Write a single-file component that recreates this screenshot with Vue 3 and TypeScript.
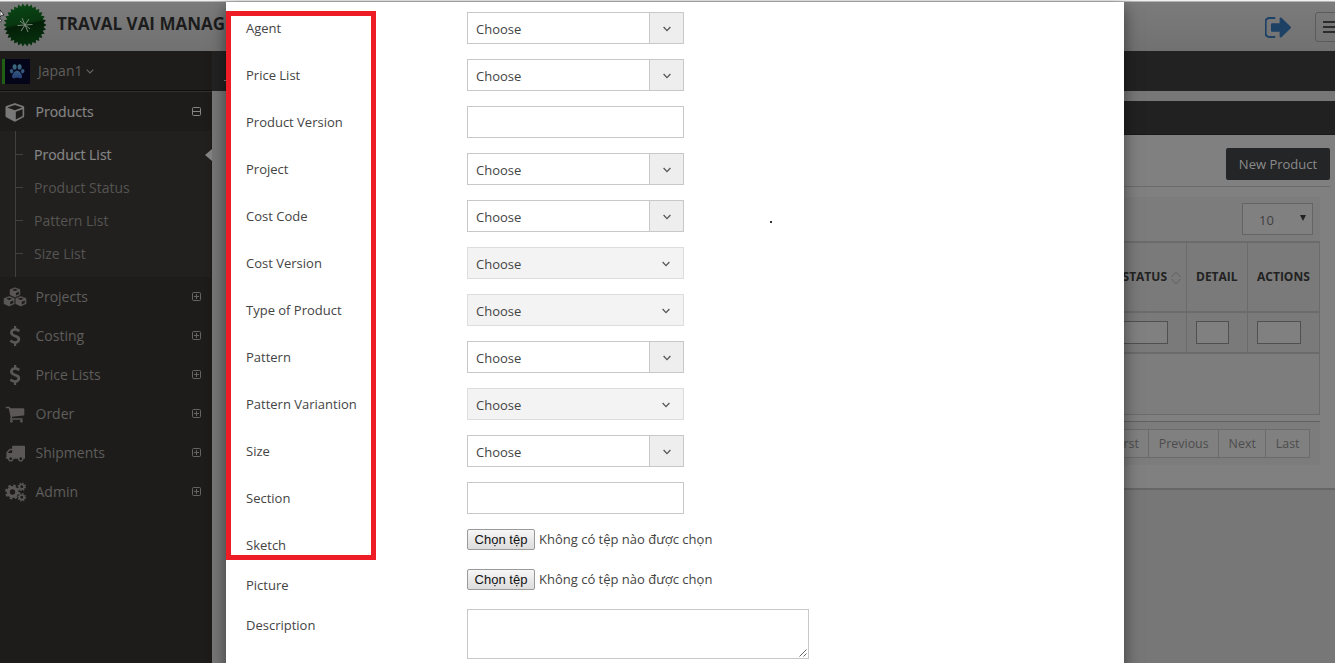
<script setup lang="ts">
interface NavItem { label: string; icon: string }
interface Field { label: string; kind: 'select' | 'disabled' | 'text' | 'file' | 'area' }

const subItems: string[] = ['Product List', 'Product Status', 'Pattern List', 'Size List']

const navItems: NavItem[] = [
  { label: 'Projects', icon: 'cubes' },
  { label: 'Costing', icon: 'usd' },
  { label: 'Price Lists', icon: 'usd' },
  { label: 'Order', icon: 'cart' },
  { label: 'Shipments', icon: 'truck' },
  { label: 'Admin', icon: 'cogs' },
]

const fields: Field[] = [
  { label: 'Agent', kind: 'select' },
  { label: 'Price List', kind: 'select' },
  { label: 'Product Version', kind: 'text' },
  { label: 'Project', kind: 'select' },
  { label: 'Cost Code', kind: 'select' },
  { label: 'Cost Version', kind: 'disabled' },
  { label: 'Type of Product', kind: 'disabled' },
  { label: 'Pattern', kind: 'select' },
  { label: 'Pattern Variantion', kind: 'disabled' },
  { label: 'Size', kind: 'select' },
  { label: 'Section', kind: 'text' },
  { label: 'Sketch', kind: 'file' },
  { label: 'Picture', kind: 'file' },
  { label: 'Description', kind: 'area' },
]

const pages: string[] = ['First', 'Previous', 'Next', 'Last']

// Outline of the serrated badge: alternating outer and inner radii.
const teeth = 30
const badge: string = Array.from({ length: teeth * 2 }, (_, i) => {
  const a = (i * Math.PI) / teeth
  const r = i % 2 === 0 ? 21.5 : 18.6
  return `${(22 + r * Math.cos(a)).toFixed(2)},${(22 + r * Math.sin(a)).toFixed(2)}`
}).join(' ')

const paths: Record<string, string> = {
  usd: 'M1362 1185q0 153-99.5 263.5t-258.5 136.5v175q0 14-9 23t-23 9h-135q-13 0-22.5-9.5t-9.5-22.5v-175q-66-9-127.5-31t-101.5-44.5-74-48-46.5-37.5-17.5-18q-17-21-2-41l103-135q7-10 23-12 15-2 24 9l2 2q113 99 243 125 37 8 74 8 81 0 142.5-43t61.5-122q0-28-15-53t-33.5-42-58.5-37.5-66-32-80-32.5q-39-16-61.5-25t-61.5-26.5-62.5-31-56.5-35.5-53.5-42.5-43.5-49-35.5-58-21-66.5-8.5-78q0-138 98-242t255-134v-180q0-13 9.5-22.5t22.5-9.5h135q14 0 23 9t9 23v176q57 6 110.5 23t87 33.5 63.5 37.5 39 29 15 14q17 18 5 38l-81 146q-8 15-23 16-14 3-27-7-3-3-14.5-12t-39-26.5-58.5-32-74.5-26-85.5-11.5q-95 0-155 43t-60 111q0 26 8.5 48t29.5 41.5 39.5 33 56 31 60.5 27 70 27.5q53 20 81 31.5t76 35 75.5 42.5 62 50 53 63.5 31.5 76.5 13 94z',
  cart: 'M704 1536q0 52-38 90t-90 38-90-38-38-90 38-90 90-38 90 38 38 90zm896 0q0 52-38 90t-90 38-90-38-38-90 38-90 90-38 90 38 38 90zm128-1088v512q0 24-16.5 42.5t-40.5 21.5l-1044 122q13 60 13 70 0 16-24 64h920q26 0 45 19t19 45-19 45-45 19h-1024q-26 0-45-19t-19-45q0-11 8-31.5t16-36 21.5-40 15.5-29.5l-177-823h-204q-26 0-45-19t-19-45 19-45 45-19h256q16 0 28.5 6.5t19.5 15.5 13 24.5 8 26 5.5 29.5 4.5 26h1201q26 0 45 19t19 45z',
  truck: 'M640 1408q0-52-38-90t-90-38-90 38-38 90 38 90 90 38 90-38 38-90zm-384-512h384v-256h-158q-13 0-22 9l-195 195q-9 9-9 22v30zm1280 512q0-52-38-90t-90-38-90 38-38 90 38 90 90 38 90-38 38-90zm256-1088v1024q0 15-4 26.5t-13.5 18.5-16.5 11.5-23.5 6-22.5 2-25.5 0-22.5-.5q0 106-75 181t-181 75-181-75-75-181h-384q0 106-75 181t-181 75-181-75-75-181h-64q-3 0-22.5.5t-25.5 0-22.5-2-23.5-6-16.5-11.5-13.5-18.5-4-26.5q0-26 19-45t45-19v-320q0-8-.5-35t0-38 2.5-34.5 6.5-37 14-30.5 22.5-30l198-198q19-19 50.5-32t58.5-13h160v-192q0-26 19-45t45-19h1024q26 0 45 19t19 45z',
}
</script>

<template>
  <div class="page">
    <div class="edge"></div>
    <header class="topbar">
      <svg class="logo" viewBox="0 0 44 44">
        <defs>
          <linearGradient id="leaf" x1="0.1" y1="0" x2="0.3" y2="1">
            <stop offset="0" stop-color="#0a4716" />
            <stop offset="0.5" stop-color="#08370f" />
            <stop offset="0.56" stop-color="#041f08" />
            <stop offset="1" stop-color="#06300d" />
          </linearGradient>
        </defs>
        <polygon :points="badge" fill="url(#leaf)" />
        <path d="M14.500 22.500l15-1M19 15l6 14M26 16l-8 12M17 18l10 8" stroke="#7b8b7b" stroke-width="1" fill="none" />
      </svg>
      <div class="brand">TRAVAL VAI MANAG</div>
      <svg class="signout" viewBox="96 256 1536 1280" preserveAspectRatio="none">
        <path fill="#1d4165" d="M704 1440q0 4 1 20t.5 26.500-3 23.500-10 19.500-20.500 6.500h-320q-119 0-203.500-84.500t-84.500-203.500v-704q0-119 84.500-203.500t203.500-84.500h320q13 0 22.500 9.500t9.500 22.500q0 4 1 20t.5 26.500-3 23.500-10 19.500-20.500 6.500h-320q-66 0-113 47t-47 113v704q0 66 47 113t113 47h312l11.500 1 11.500 3 8 5.500 7 9 2 13.500zm928-544q0 26-19 45l-544 544q-19 19-45 19t-45-19-19-45v-288h-448q-26 0-45-19t-19-45v-384q0-26 19-45t45-19h448v-288q0-26 19-45t45-19 45 19l544 544q19 19 19 45z" />
      </svg>
      <div class="burger"><i></i><i></i><i></i></div>
    </header>

    <div class="body">
      <aside class="sidebar">
        <div class="user">
          <div class="avatar">
            <svg viewBox="0 0 25 25">
              <defs>
                <linearGradient id="paw" x1="0" y1="5" x2="0" y2="20" gradientUnits="userSpaceOnUse">
                  <stop offset="0" stop-color="#3f7080" />
                  <stop offset="1" stop-color="#263c78" />
                </linearGradient>
              </defs>
              <g fill="url(#paw)">
                <ellipse cx="9.600" cy="8" rx="2" ry="2.800" />
                <ellipse cx="14.600" cy="8" rx="2" ry="2.800" />
                <ellipse cx="6.600" cy="12.200" rx="1.700" ry="2.200" transform="rotate(-20 6.600 12.200)" />
                <ellipse cx="17.700" cy="12.200" rx="1.700" ry="2.200" transform="rotate(20 17.700 12.200)" />
                <path d="M12.100 11.500c2.300 0 5 3.800 5 6 0 1.900-1.700 2-2.700 1.700-1.500-.6-3-.6-4.600 0-1.200.4-2.700.1-2.700-1.700 0-2.200 2.700-6 5-6z" />
              </g>
            </svg>
          </div>
          <span>Japan1</span>
          <svg class="caret" viewBox="0 0 8 5"><path d="M.7.700L4 4 7.300.7" /></svg>
        </div>

        <div class="nav open">
          <svg class="ico" viewBox="0 0 20 20">
            <path fill="#787878" fill-rule="evenodd" d="M9.300 1.200L1.300 4.100Q.5 4.400.5 5.300V14Q.5 14.700 1.200 15.200L9.200 19.500Q9.800 19.800 10.500 19.500L18.500 15.200Q19.200 14.800 19.200 14V5.300Q19.200 4.400 18.300 4.100L10.300 1.200Q9.800 1 9.300 1.200zM9.800 2.900L17.300 5.500 9.800 8.300 2.400 5.500zM10.800 9.700L17.600 7.200V13.900L10.800 17.600z" />
          </svg>
          <span>Products</span>
          <svg class="box" viewBox="0 0 9 9"><rect x=".5" y=".5" width="8" height="8" rx="1" /><path d="M1 4.500h7" /></svg>
        </div>

        <div class="sub">
          <div v-for="(s, i) in subItems" :key="s" class="subitem" :class="{ active: i === 0 }">{{ s }}</div>
        </div>

        <div v-for="n in navItems" :key="n.label" class="nav">
          <svg v-if="n.icon === 'cubes'" class="ico wide" viewBox="0 0 24 20">
            <g fill="#5a5756" stroke="#1d1c1a" stroke-width=".3">
              <path d="M12 .2L17.300 2.300V8L12 10.600 6.700 8V2.300z" />
              <path d="M6.300 9L11.700 11.200V17L6.300 19.600.6 17V11.200z" />
              <path d="M17.700 9L23.400 11.200V17L17.700 19.600 12.300 17V11.200z" />
            </g>
            <g fill="#1d1c1a">
              <path d="M12 1.700L15 2.900 12 4.100 9 2.900zM12.900 5.900L15.900 4.700V7.200L12.900 8.600z" />
              <path d="M6.200 10.700L9.200 11.800 6.200 13 3.200 11.800zM7.200 14.700L10.300 13.400V16.100L7.200 17.500z" />
              <path d="M17.700 10.700L20.700 11.800 17.700 13 14.700 11.800zM18.700 14.700L21.800 13.400V16.100L18.700 17.500z" />
            </g>
          </svg>
          <svg v-else-if="n.icon === 'cogs'" class="ico wide" viewBox="0 0 24 20">
            <g fill="none" stroke="#5a5756">
              <circle cx="9.500" cy="10" r="4.300" stroke-width="3.200" />
              <circle cx="9.500" cy="10" r="6.500" stroke-width="2" stroke-dasharray="2.550 2.555" />
              <circle cx="18.800" cy="4.800" r="2.300" stroke-width="1.700" />
              <circle cx="18.800" cy="4.800" r="3.600" stroke-width="1.400" stroke-dasharray="1.400 1.427" />
              <circle cx="18.800" cy="15.300" r="2.300" stroke-width="1.700" />
              <circle cx="18.800" cy="15.300" r="3.600" stroke-width="1.400" stroke-dasharray="1.400 1.427" />
            </g>
          </svg>
          <svg v-else class="ico" viewBox="0 0 1792 1792"><path fill="#5a5756" :d="paths[n.icon]" /></svg>
          <span>{{ n.label }}</span>
          <svg class="box" viewBox="0 0 9 9"><rect x=".5" y=".5" width="8" height="8" rx="1" /><path d="M2 4.500h5M4.500 2v5" /></svg>
        </div>
      </aside>

      <main class="main">
        <div class="ribbon"></div>
        <section class="widget">
          <div class="widget-head"></div>
          <div class="widget-body">
            <div class="actions"><button class="new">New Product</button></div>
            <div class="table">
              <div class="toolbar"><div class="count"><span>10</span><i></i></div></div>
              <div class="row head">
                <div class="cell status">STATUS
                  <svg viewBox="0 0 10 14"><path d="M.500 6L5 1.200 9.500 6M.500 8L5 12.800 9.500 8" /></svg>
                </div>
                <div class="cell detail">DETAIL</div>
                <div class="cell act">ACTIONS</div>
              </div>
              <div class="row filter">
                <div class="cell status"><b></b></div>
                <div class="cell detail"><b></b></div>
                <div class="cell act"><b></b></div>
              </div>
              <div class="empty"></div>
              <div class="pager"><div class="pages"><span v-for="p in pages" :key="p">{{ p }}</span></div></div>
            </div>
          </div>
        </section>
      </main>
    </div>

    <div class="modal">
      <div v-for="f in fields" :key="f.label" class="field" :class="'is-' + f.kind">
        <label>{{ f.label }}</label>
        <div v-if="f.kind === 'select' || f.kind === 'disabled'" class="select">
          <span>Choose</span>
          <div class="arrow"><svg viewBox="0 0 8 6"><path d="M.6 1L4 4.600 7.400 1" /></svg></div>
        </div>
        <div v-else-if="f.kind === 'text'" class="input"></div>
        <div v-else-if="f.kind === 'file'" class="upload"><button>Chọn tệp</button><span>Không có tệp nào được chọn</span></div>
        <div v-else class="area"><svg viewBox="0 0 8 8"><path d="M.5 7.500l7-7M4.500 7.500l3-3" /></svg></div>
      </div>
    </div>
    <div class="dot"></div>
    <div class="mark"></div>
    <div class="tick"></div>
    <svg class="cursor" viewBox="0 0 5 14"><path d="M0 1L4 6 1.500 6.200 0 8zM0 9L1.500 12 0 13" fill="#fff" stroke="#111" stroke-width=".8" /></svg>
  </div>
</template>

<style>
html, body { margin: 0; overflow: hidden; }
</style>

<style scoped>
* { box-sizing: border-box; }
.page { position: relative; width: 1335px; height: 663px; overflow: hidden; display: flex; flex-direction: column; background: #777; font-family: "Open Sans", "Noto Sans", sans-serif; font-size: 13px; color: #444; }
.edge { height: 2px; flex: none; background: #f1f1f1; border-bottom: 1px solid #b5b5b5; }
.topbar { height: 49px; flex: none; display: flex; align-items: center; background: linear-gradient(#7b7b7b, #717171); padding-left: 3px; }
.logo { width: 44px; height: 44px; margin-top: -4px; flex: none; }
.brand { margin-left: 10px; margin-top: -6px; font-size: 17px; font-weight: 700; color: #1c1c1c; white-space: nowrap; }
.signout { width: 26px; height: 21px; margin-left: auto; margin-top: 2px; }
.burger { width: 37px; height: 30px; margin-left: 24px; margin-right: -17px; border: 1px solid #5b5b5b; border-radius: 3px; padding: 8px 7px; display: flex; flex-direction: column; gap: 3px; }
.burger i { display: block; height: 2px; flex: none; background: #2b2b2b; }
.body { flex: 1; display: flex; min-height: 0; }
.sidebar { width: 212px; flex: none; background: #1d1c1a; color: #5f5e5c; font-size: 14px; }
.user { height: 40px; display: flex; align-items: center; padding-left: 2px; border-bottom: 1px solid #0f0f0e; }
.avatar { width: 28px; height: 25px; border-left: 3px solid #206015; background: #05051a; margin-right: 8px; margin-top: 1px; }
.avatar svg { display: block; width: 25px; height: 25px; }
.caret { width: 8px; height: 5px; margin-left: 4px; margin-top: 1px; }
.caret path { fill: none; stroke: #666; stroke-width: 1.2; }
.nav { height: 39px; display: flex; align-items: center; padding: 0 11px 0 5px; }
.nav span { flex: 1; margin-left: 10.500px; }
.nav.open { height: 40px; border-top: 1px solid #31302e; color: #858585; }
.nav.open span { -webkit-text-stroke: .2px #858585; }
.ico { width: 20px; height: 20px; flex: none; }
.nav.open .ico { margin-top: 1px; }
.ico.wide { width: 24px; margin-left: -2px; margin-right: -2px; }
.box { width: 9px; height: 9px; flex: none; }
.box rect, .box path { fill: none; stroke: #666462; stroke-width: 1; }
.nav.open .box rect, .nav.open .box path { stroke: #858585; }
.sub { height: 146px; background: #21201e; margin-right: 1px; padding: 7px 0 0 15px; position: relative; }
.sub::before { content: ""; position: absolute; left: 15px; top: 0; bottom: 0; width: 1px; background: #41403e; }
.subitem { height: 33px; display: flex; align-items: center; color: #555452; font-size: 14px; position: relative; }
.subitem::before { content: ""; width: 8px; height: 1px; background: #41403e; margin-right: 11px; }
.subitem.active { color: #858585; -webkit-text-stroke: .2px #858585; }
.subitem.active::after { content: ""; margin-left: auto; margin-right: -1px; border: 6px solid transparent; border-right: 7px solid #838383; border-left: 0; }
.main { flex: 1; min-width: 0; }
.ribbon { height: 40px; background: #222; }
.widget { margin: 10px 0 0 14px; }
.widget-head { height: 34px; background: #212121; border-bottom: 1px solid #191919; }
.widget-body { height: 355px; background: #808080; border-bottom: 2px solid #666; padding: 0 5px; }
.actions { height: 52px; display: flex; justify-content: flex-end; align-items: flex-start; padding-top: 13px; border-bottom: 1px solid #6b6b6b; }
.new { width: 104px; height: 32px; border: 0; border-radius: 2px; background: #242527; color: #8b8b8b; font: 13px "Open Sans", sans-serif; padding: 0; }
.table { margin: 10px 10px 0 10px; }
.toolbar { height: 44px; background: #7c7c7c; display: flex; justify-content: flex-end; padding: 6px 7px 0 0; }
.count { width: 71px; height: 32px; border: 1px solid #646464; background: #808080; display: flex; align-items: center; justify-content: space-between; padding: 2px 6px 0 16px; color: #404040; }
.count i { border: 3.500px solid transparent; border-top: 6px solid #222; border-bottom: 0; margin-top: -4px; }
.row { display: flex; background: #7a7a7a; }
.head { height: 71px; border-top: 2px solid #6b6b6b; border-bottom: 1px solid #6b6b6b; font-size: 12px; font-weight: 700; color: #222; }
.filter { height: 42px; border-top: 1px solid #6b6b6b; border-bottom: 2px solid #6b6b6b; }
.cell { border-right: 1px solid #6b6b6b; display: flex; align-items: center; padding-left: 9px; }
.cell.status { flex: 1; justify-content: flex-end; padding-right: 5px; }
.cell.status svg { width: 10px; height: 14px; margin-left: 4px; margin-top: 2px; }
.head .cell { padding-bottom: 1px; }
.cell.status path { fill: none; stroke: #5c5c5c; stroke-width: .9; }
.cell.detail { width: 61px; }
.cell.act { width: 72px; }
.cell b { height: 23px; border: 1px solid #505050; background: #808080; }
.filter .cell.status { padding-right: 18px; }
.status b { width: 90px; }
.detail b { width: 33px; }
.act b { width: 44px; }
.empty { height: 61px; background: #7d7d7d; border-right: 1px solid #6b6b6b; border-bottom: 1px solid #6b6b6b; }
.pager { margin-top: 6px; height: 44px; border-top: 1px solid #606060; background: #7c7c7c; display: flex; justify-content: flex-end; padding: 7px 10px 0 0; }
.pages { display: flex; height: 29px; border: 1px solid #6b6b6b; background: #808080; }
.pages span { padding: 0 9.500px; line-height: 27px; border-left: 1px solid #6b6b6b; color: #4c4c4c; font-size: 12.400px; }
.pages span:first-child { border-left: 0; }
.modal { position: absolute; left: 226px; top: 2px; width: 898px; height: 670px; background: #fff; box-shadow: 0 5px 15px rgba(0, 0, 0, .5); padding: 10px 0 0 20px; }
.field { height: 47px; display: flex; align-items: flex-start; }
.field label { width: 221px; line-height: 18px; margin-top: 7px; }
.is-file { height: 40px; }
.input, .select { width: 217px; height: 32px; border: 1px solid #c8c8c8; }
.select { display: flex; align-items: stretch; color: #444; }
.select span { flex: 1; padding-left: 8px; line-height: 32px; }
.arrow { width: 34px; border-left: 1px solid #c8c8c8; background: #eee; display: flex; align-items: center; justify-content: center; }
.arrow svg { width: 8px; height: 6px; margin-top: 2px; }
.arrow path { fill: none; stroke: #555; stroke-width: 1.300; }
.is-disabled .select { background: #f3f3f3; border-color: #ddd; }
.is-disabled .arrow { background: none; border-color: transparent; padding-right: 1px; }
.upload { display: flex; align-items: center; height: 21px; }
.upload button { width: 68px; height: 21px; padding: 0; border: 1px solid #999; border-radius: 2px; background: linear-gradient(#f6f6f6, #ddd); color: #111; font: 13px "Liberation Sans", Arial, sans-serif; }
.upload span { margin-left: 4px; margin-top: -2px; }
.area { width: 342px; height: 50px; border: 1px solid #c8c8c8; display: flex; align-items: flex-end; justify-content: flex-end; padding: 1px; }
.area svg { width: 8px; height: 8px; }
.area path { stroke: #555; stroke-width: .9; fill: none; }
.mark { position: absolute; left: 226px; top: 11px; width: 150px; height: 549px; border: 5px solid #ee1c25; }
.dot { position: absolute; left: 770px; top: 221px; width: 2px; height: 2px; background: #333; }
.tick { position: absolute; left: 224px; top: 80px; width: 2px; height: 1px; background: #666; }
.cursor { position: absolute; left: 0; top: 9px; width: 5px; height: 14px; }
</style>
